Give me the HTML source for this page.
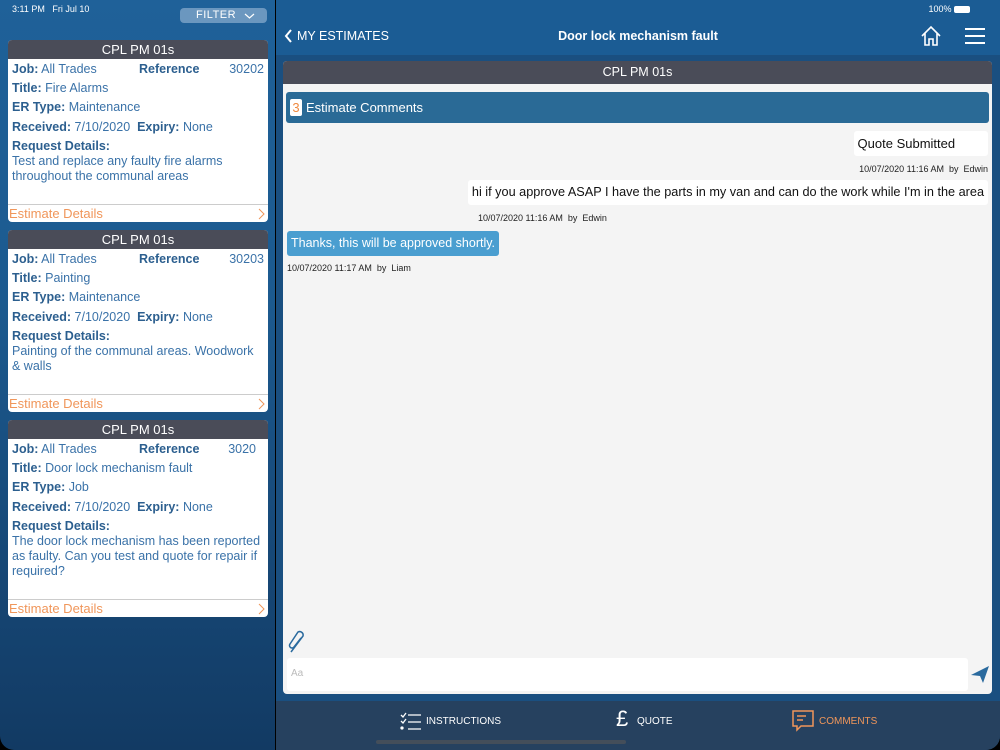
<!DOCTYPE html>
<html><head><meta charset="utf-8"><style>
*{box-sizing:border-box;margin:0;padding:0}
body{width:1000px;height:750px;overflow:hidden;font-family:"Liberation Sans",sans-serif;position:relative;background:#000}
#left{position:absolute;left:0;top:0;width:275px;height:750px;background:linear-gradient(180deg,#1f6199 0%,#1c5a8f 40%,#174a7a 70%,#123a63 100%);border-radius:0 0 0 14px}
#right{position:absolute;left:276px;top:0;width:724px;height:750px;background:#1a4f80;border-radius:0 0 14px 0;overflow:hidden}
.status{position:absolute;top:4px;font-size:9px;color:#fff}
.filter{position:absolute;left:180px;top:8px;width:87px;height:15px;background:#6b97bf;border-radius:4px;color:#fff;font-size:11px;line-height:15px;letter-spacing:.5px;padding-left:16px}
.card{position:absolute;left:8px;width:260px;background:#fff;border-radius:4px;overflow:hidden;color:#3a72a8;font-size:12.5px}
.card .h{background:#4a4c58;color:#fff;height:19px;line-height:19px;text-align:center;font-size:13px}
.card .r{position:absolute;left:4px;white-space:nowrap}
.card b{color:#2c5f8f}
.card .ft{position:absolute;left:0;right:0;bottom:0;height:18px;border-top:1px solid #ccc;color:#f0965a;font-size:13px;line-height:17px;padding-left:1px}
.card .ft svg{position:absolute;right:3px;top:3px}
#top{position:absolute;left:0;top:0;width:724px;height:55px;background:#1b5c94}
#panel{position:absolute;left:7px;top:61px;width:709px;height:633px;background:#f4f4f4;border-radius:4px;overflow:hidden}
.ts{font-size:9px;color:#222;position:absolute}
.bub{position:absolute;background:#fff;border-radius:3px;font-size:12.5px;color:#111;padding:0 4px;height:25px;line-height:25px;white-space:nowrap}
#nav{position:absolute;left:0;top:701px;width:724px;height:49px;background:#26415f}
.ni{position:absolute;top:15px;font-size:10px;color:#fff}
</style></head><body>
<div id="left">
<div class="status" style="left:12px">3:11 PM&nbsp;&nbsp;&nbsp;Fri Jul 10</div>
<div class="filter">FILTER<svg style="position:absolute;left:64px;top:5px" width="11" height="6" fill="none" stroke="#fff" stroke-width="1.2"><path d="M1 1l4.5 4L10 1"/></svg></div>

<div class="card" style="top:40px;height:182px">
<div class="h">CPL PM 01s</div>
<div class="r" style="top:22px"><b>Job:</b> All Trades</div>
<div class="r" style="top:22px;left:131px"><b>Reference</b></div>
<div class="r" style="top:22px;left:auto;right:4px">30202</div>
<div class="r" style="top:41px"><b>Title:</b> Fire Alarms</div>
<div class="r" style="top:60px"><b>ER Type:</b> Maintenance</div>
<div class="r" style="top:80px"><b>Received:</b> 7/10/2020&nbsp;&nbsp;<b>Expiry:</b> None</div>
<div class="r" style="top:99px"><b>Request Details:</b></div>
<div class="r" style="top:114px;line-height:15px">Test and replace any faulty fire alarms<br>throughout the communal areas</div>
<div class="ft">Estimate Details<svg width="7" height="12" fill="none" stroke="#f0965a"><path d="M1 1l5 5-5 5"/></svg></div>
</div>

<div class="card" style="top:230px;height:182px">
<div class="h">CPL PM 01s</div>
<div class="r" style="top:22px"><b>Job:</b> All Trades</div>
<div class="r" style="top:22px;left:131px"><b>Reference</b></div>
<div class="r" style="top:22px;left:auto;right:4px">30203</div>
<div class="r" style="top:41px"><b>Title:</b> Painting</div>
<div class="r" style="top:60px"><b>ER Type:</b> Maintenance</div>
<div class="r" style="top:80px"><b>Received:</b> 7/10/2020&nbsp;&nbsp;<b>Expiry:</b> None</div>
<div class="r" style="top:99px"><b>Request Details:</b></div>
<div class="r" style="top:114px;line-height:15px">Painting of the communal areas. Woodwork<br>&amp; walls</div>
<div class="ft">Estimate Details<svg width="7" height="12" fill="none" stroke="#f0965a"><path d="M1 1l5 5-5 5"/></svg></div>
</div>

<div class="card" style="top:420px;height:197px">
<div class="h">CPL PM 01s</div>
<div class="r" style="top:22px"><b>Job:</b> All Trades</div>
<div class="r" style="top:22px;left:131px"><b>Reference</b></div>
<div class="r" style="top:22px;left:auto;right:12px">3020</div>
<div class="r" style="top:41px"><b>Title:</b> Door lock mechanism fault</div>
<div class="r" style="top:60px"><b>ER Type:</b> Job</div>
<div class="r" style="top:80px"><b>Received:</b> 7/10/2020&nbsp;&nbsp;<b>Expiry:</b> None</div>
<div class="r" style="top:99px"><b>Request Details:</b></div>
<div class="r" style="top:114px;line-height:15px">The door lock mechanism has been reported<br>as faulty. Can you test and quote for repair if<br>required?</div>
<div class="ft">Estimate Details<svg width="7" height="12" fill="none" stroke="#f0965a"><path d="M1 1l5 5-5 5"/></svg></div>
</div>
</div>

<div id="right">
<div id="top">
<div class="status" style="right:30px;left:auto">100% <span style="display:inline-block;width:16px;height:7px;background:#fff;border-radius:2px;vertical-align:middle"></span></div>
<svg style="position:absolute;left:8px;top:29px" width="9" height="14" fill="none" stroke="#fff" stroke-width="2"><path d="M7 1L2 7l5 6"/></svg>
<div style="position:absolute;left:21px;top:29px;color:#fff;font-size:12.5px">MY ESTIMATES</div>
<div style="position:absolute;left:0;width:724px;text-align:center;top:29px;color:#fff;font-size:12.5px;font-weight:bold">Door lock mechanism fault</div>
<svg style="position:absolute;left:644px;top:25px" width="22" height="22" viewBox="0 0 22 22" fill="none" stroke="#fff" stroke-width="1.6"><path d="M2 11L11 2l9 9M5 8v12h4v-6h4v6h4V8"/></svg>
<svg style="position:absolute;left:689px;top:27px" width="20" height="18" stroke="#fff" stroke-width="2"><path d="M0 2h20M0 9h20M0 16h20"/></svg>
</div>
<div id="panel">
<div style="height:23px;background:#4a4c58;color:#fff;text-align:center;line-height:23px;font-size:12.5px">CPL PM 01s</div>
<div style="position:absolute;left:3px;top:31px;width:703px;height:31px;background:#2a6a96;border-radius:3px;color:#fff;font-size:13px;line-height:31px;padding-left:4px"><span style="display:inline-block;background:#fff;color:#f08a40;width:12px;height:17px;line-height:17px;text-align:center;border-radius:2px;margin-right:4px">3</span>Estimate Comments</div>
<div class="bub" style="right:4px;top:70px;font-size:13px">Quote Submitted&nbsp;&nbsp;&nbsp;&nbsp;&nbsp;&nbsp;&nbsp;&nbsp;</div>
<div class="ts" style="right:4px;top:103px">10/07/2020 11:16 AM&nbsp; by&nbsp; Edwin</div>
<div class="bub" style="right:4px;top:119px;font-size:12.7px">hi if you approve ASAP I have the parts in my van and can do the work while I'm in the area</div>
<div class="ts" style="left:195px;top:152px">10/07/2020 11:16 AM&nbsp; by&nbsp; Edwin</div>
<div class="bub" style="left:4px;top:170px;background:#4a9ed0;color:#fff">Thanks, this will be approved shortly.</div>
<div class="ts" style="left:4px;top:202px">10/07/2020 11:17 AM&nbsp; by&nbsp; Liam</div>
<svg style="position:absolute;left:4px;top:569px" width="22" height="26" fill="none" stroke="#2a6a9e" stroke-width="1.5"><path d="M4 22L16 6a3.5 3.5 0 0 0-5-4L3 14a2.5 2.5 0 0 0 4 3l7-9"/></svg>
<div style="position:absolute;left:4px;top:597px;width:681px;height:33px;background:#fff;border-radius:3px;color:#bbb;font-size:10px;padding:10px 4px">Aa</div>
<svg style="position:absolute;left:688px;top:605px" width="18" height="17"><path d="M0 9L18 0 12 17 9 10z" fill="#2a6a9e"/></svg>
</div>
<div id="nav">
<svg style="position:absolute;left:124px;top:11px" width="22" height="18" stroke="#fff" fill="none" stroke-width="1.3"><path d="M1 3l2 2 3-4M1 9l2 2 3-4M8 3h13M8 10h13M8 17h13"/><circle cx="2" cy="16" r="1" fill="#fff"/></svg>
<div class="ni" style="left:150px">INSTRUCTIONS</div>
<div style="position:absolute;left:340px;top:5px;color:#fff;font-size:22px">£</div>
<div class="ni" style="left:361px">QUOTE</div>
<svg style="position:absolute;left:516px;top:9px" width="22" height="22" fill="none" stroke="#f0965a" stroke-width="1.5"><path d="M1 1h20v15H9l-4 4v-4H1z M5 6h9M5 10h6"/></svg>
<div class="ni" style="left:543px;color:#f0965a">COMMENTS</div>
<div style="position:absolute;left:100px;top:39px;width:250px;height:4px;background:#444e5a;border-radius:2px"></div>
</div>
</div>
</body></html>
